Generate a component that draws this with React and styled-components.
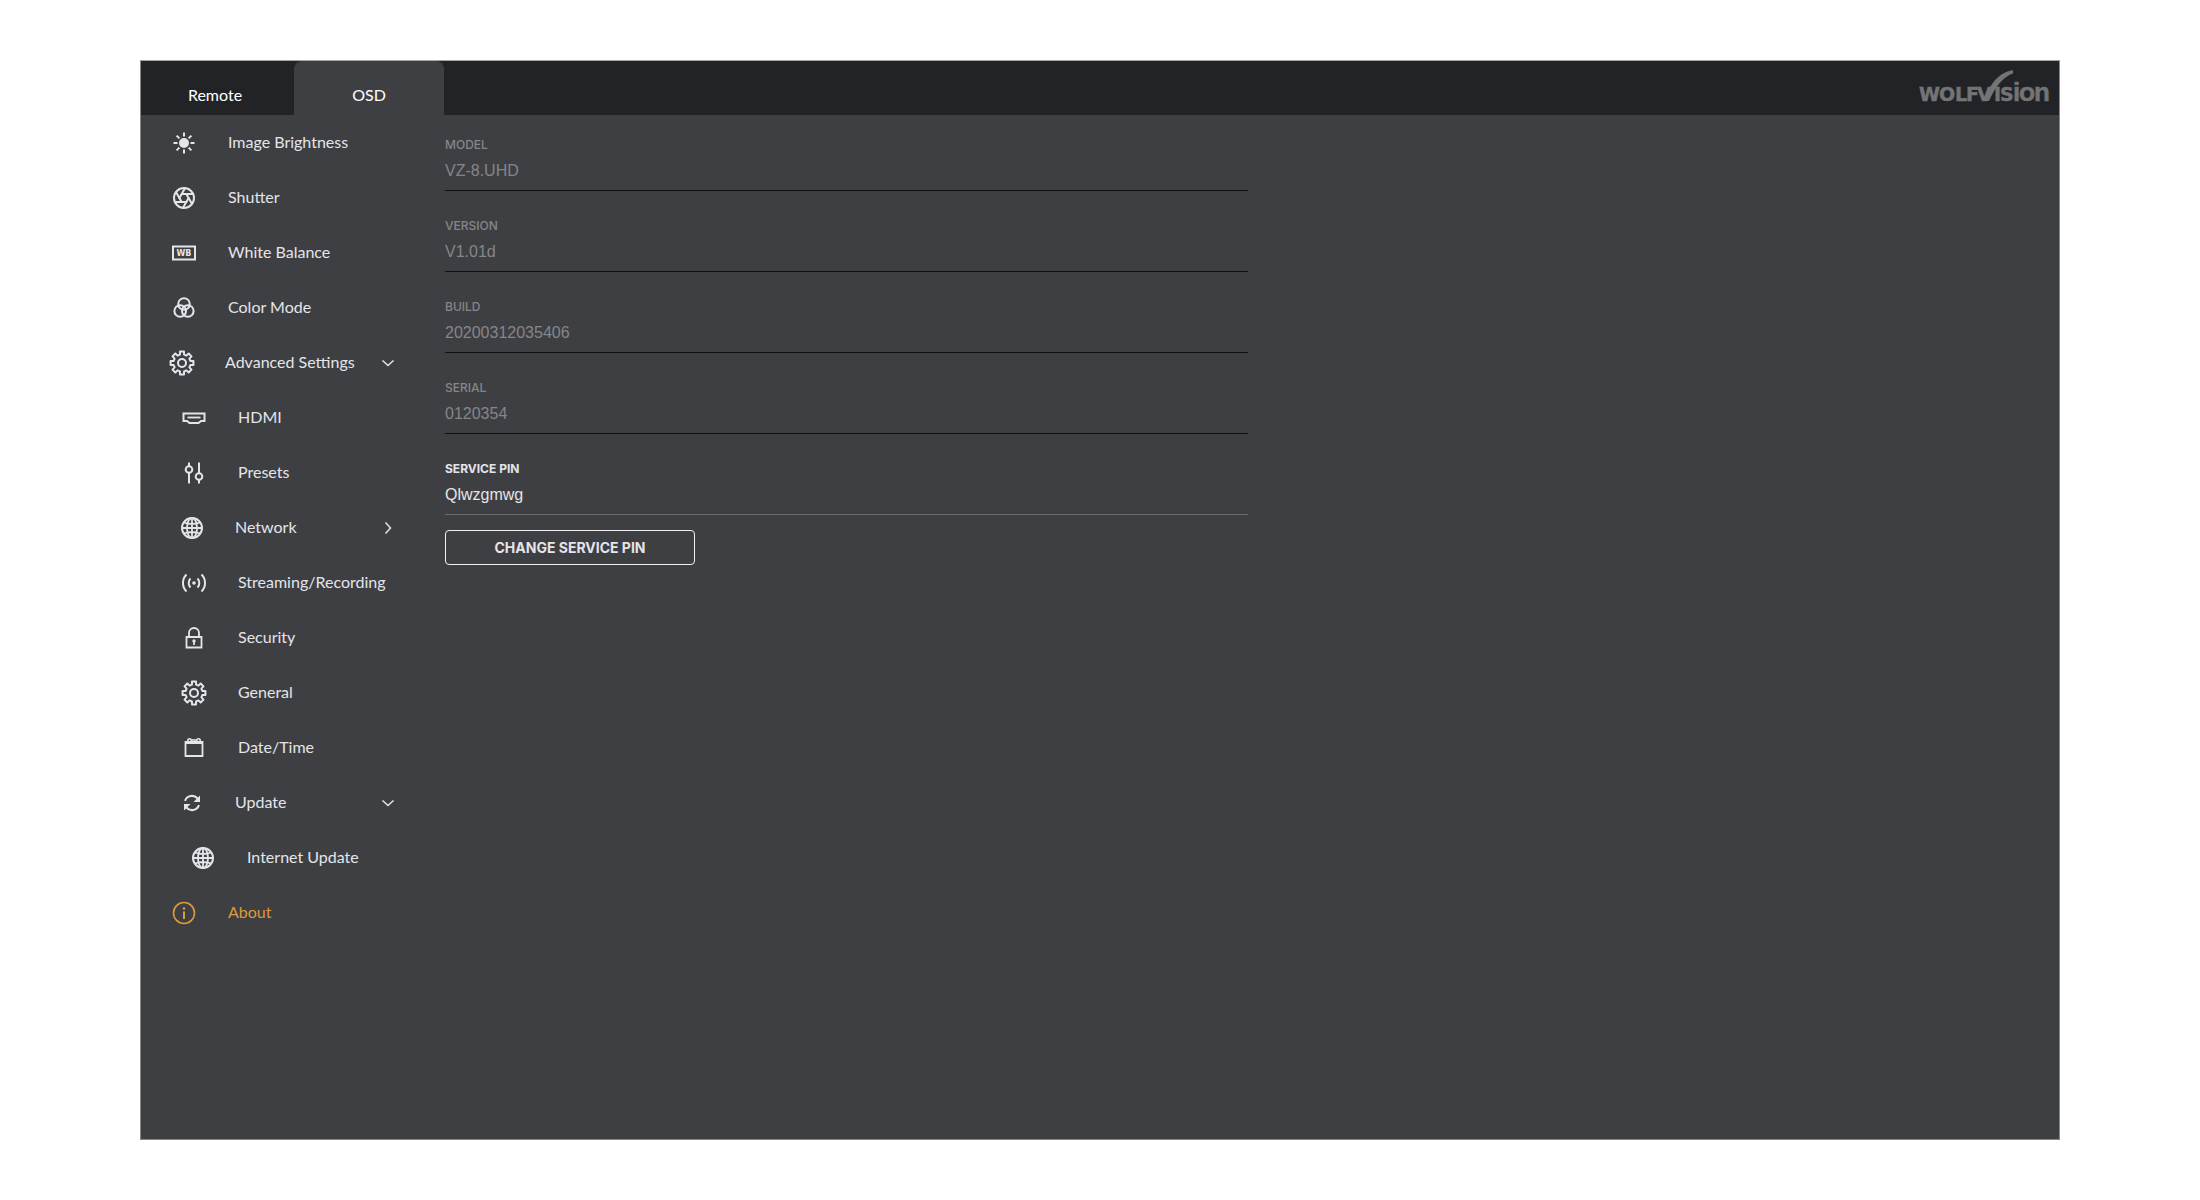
import React, { useState } from "react";
import styled, { createGlobalStyle } from "styled-components";
import { Aperture } from "lucide-react";

const GlobalStyle = createGlobalStyle`
  *, *::before, *::after { box-sizing: border-box; }
  body {
    margin: 0;
    background: #ffffff;
    font-family: "Liberation Sans", Arial, sans-serif;
  }
`;

const Page = styled.div`
  display: flex;
  min-height: 100vh;
  padding: 60px 140px;
`;

const Frame = styled.div`
  flex: 1;
  display: flex;
  flex-direction: column;
  border: 1px solid #85878a;
  border-top-color: #a3a7a7;
  background: #3e3f43;
`;

const Header = styled.header`
  display: flex;
  height: 54px;
  padding-right: 8px;
  background: #222327;
`;

const Tabs = styled.div`
  display: flex;
  flex: 1;
  gap: 5px;
`;

const Tab = styled.button`
  width: ${(p) => (p.$active ? 150 : 148)}px;
  padding: 14px 0 0;
  border: 0;
  border-radius: 8px 8px 0 0;
  background: ${(p) => (p.$active ? "#3e3f43" : "transparent")};
  color: #ffffff;
  font: 400 16px/20px Lato, sans-serif;
  cursor: pointer;
`;

const Logo = styled.svg`
  display: block;
  width: 132px;
  height: 54px;
  fill: #737476;
`;

const Body = styled.div`
  display: flex;
  flex: 1;
`;

const Nav = styled.nav`
  flex: 0 0 304px;
  min-width: 0;
`;

const indents = [31, 41, 50];

const NavLink = styled.a`
  display: flex;
  align-items: center;
  gap: 32px;
  height: 55px;
  padding-left: ${(p) => indents[p.$level]}px;
  color: ${(p) => (p.$active ? "#dd9a3a" : "#e4e5e9")};
  font: 400 16px/20px Lato, sans-serif;
  text-decoration: none;
`;

const NavGroup = styled.button`
  display: flex;
  align-items: center;
  gap: 31px;
  width: 100%;
  height: 55px;
  padding: 0 51px 0 ${(p) => indents[p.$level] - 2}px;
  border: 0;
  background: none;
  color: #e4e5e9;
  font: 400 16px/20px Lato, sans-serif;
  text-align: left;
  cursor: pointer;
`;

const ItemName = styled.span`
  flex: 1;
  min-width: 0;
  padding-bottom: 2px;
  white-space: nowrap;
`;

const Glyph = styled.svg`
  flex: none;
  width: ${(p) => p.$size || 24}px;
  height: ${(p) => p.$size || 24}px;
  overflow: visible;
  fill: none;
  stroke: currentColor;
  stroke-width: 2;
`;

const Content = styled.main`
  flex: 1;
  display: flex;
  flex-direction: column;
  align-items: flex-start;
  gap: 27px;
  padding-top: 22px;
`;

const Field = styled.label`
  display: block;
  width: 50%;
  max-width: 803px;
  color: ${(p) => (p.$editable ? "#e4e5e9" : "#85868a")};
`;

const Caption = styled.span`
  display: block;
  font: ${(p) => (p.$editable ? 700 : 500)} 12px/16px Inter, sans-serif;
  text-transform: uppercase;
`;

const Value = styled.input`
  display: block;
  width: 100%;
  padding: 9px 0 10px;
  border: 0;
  border-bottom: 1px solid ${(p) => (p.$editable ? "#6b6c70" : "#101114")};
  border-radius: 0;
  outline: 0;
  background: transparent;
  color: inherit;
  font: 400 16px/18px "Liberation Sans", Arial, sans-serif;
  height: 38px;
`;

const PinGroup = styled.div`
  display: flex;
  flex-direction: column;
  align-items: flex-start;
  gap: 15px;
  width: 100%;
`;

const PinButton = styled.button`
  width: 250px;
  height: 35px;
  padding: 0;
  border: 1px solid #f0f0f3;
  border-radius: 4px;
  background: transparent;
  color: #e4e5e9;
  font: 700 14px/16px Inter, sans-serif;
  text-transform: uppercase;
  cursor: pointer;
`;

function gearPath() {
  const pt = (r, deg) => {
    const a = (deg * Math.PI) / 180;
    return `${(12 + r * Math.cos(a)).toFixed(2)} ${(12 + r * Math.sin(a)).toFixed(2)}`;
  };
  const parts = [];
  for (let i = 0; i < 8; i += 1) {
    const c = i * 45;
    parts.push(pt(8.6, c - 14), pt(11.6, c - 10), pt(11.6, c + 10), pt(8.6, c + 14));
  }
  return `M${parts.join("L")}Z`;
}

const GEAR = gearPath();

const drawings = {
  sun: (
    <>
      <circle cx="12" cy="12" r="5" fill="currentColor" stroke="none" />
      <path d="M12 1.5v4M12 18.5v4M1.5 12h4M18.5 12h4M4.6 4.6l2.8 2.8M16.6 16.6l2.8 2.8M4.6 19.4l2.8-2.8M16.6 7.4l2.8-2.8" />
    </>
  ),
  wb: (
    <>
      <path d="M1 5.5h22v13H1z" />
      <text x="12" y="15" textAnchor="middle" fontFamily="DejaVu Sans" fontWeight="700" fontSize="8" fill="currentColor" stroke="none">WB</text>
    </>
  ),
  color: (
    <>
      <circle cx="12" cy="8" r="5.8" />
      <circle cx="8.2" cy="15" r="5.8" />
      <circle cx="15.8" cy="15" r="5.8" />
    </>
  ),
  gear: (
    <>
      <path d={GEAR} strokeLinejoin="round" />
      <circle cx="12" cy="12" r="4" />
    </>
  ),
  hdmi: (
    <>
      <path d="M1.5 7.5h21v7.5h-3.5l-2.5 2h-9l-2.5-2H1.5z" />
      <path d="M5.5 11.5h13" strokeWidth="1.8" />
    </>
  ),
  presets: (
    <>
      <path d="M7 1.5v3.5M7 12v10.5M17 1.5v10.500M17 19v3.5" />
      <circle cx="7" cy="8.500" r="3.300" />
      <circle cx="17" cy="15.500" r="3.300" />
    </>
  ),
  globe: (
    <>
      <circle cx="12" cy="12" r="10" />
      <ellipse cx="12" cy="12" rx="5" ry="10" strokeWidth="1.800" />
      <path d="M12 2v20M2 12h20M4 6.500q8 3 16 0M4 17.500q8-3 16 0" strokeWidth="1.800" />
    </>
  ),
  stream: (
    <>
      <circle cx="12" cy="12" r="1.800" fill="currentColor" stroke="none" />
      <path d="M8.500 7.500a6.500 6.500 0 0 0 0 9M15.500 7.500a6.500 6.500 0 0 1 0 9M4.500 3.500a12 12 0 0 0 0 17M19.500 3.500a12 12 0 0 1 0 17" />
    </>
  ),
  lock: (
    <>
      <path d="M4.500 11h15v10.500h-15zM7 11V7a5 5 0 0 1 10 0v4" strokeWidth="1.800" />
      <circle cx="12" cy="15" r="1.700" fill="currentColor" stroke="none" />
      <path d="M12 15v4" strokeWidth="1.800" />
    </>
  ),
  calendar: (
    <>
      <path d="M3.500 6h17v14h-17z" strokeWidth="1.800" />
      <path d="M3 7h18" strokeWidth="2" />
      <circle cx="7.500" cy="4.500" r="1.700" strokeWidth="1.600" />
      <circle cx="16.500" cy="4.500" r="1.700" strokeWidth="1.600" />
      <path d="M9.500 4h5" strokeWidth="1.600" />
    </>
  ),
  refresh: (
    <>
      <path d="M5 9.800A7.400 7.400 0 0 1 17.600 7.500M19 14.200A7.400 7.400 0 0 1 6.400 16.500" />
      <path d="M20 4.500v6.500h-6.500zM4 19.500V13h6.500z" fill="currentColor" stroke="none" />
    </>
  ),
  info: (
    <>
      <circle cx="12" cy="12" r="10.500" strokeWidth="1.600" />
      <circle cx="12" cy="7.500" r="1.300" fill="currentColor" stroke="none" />
      <path d="M12 10.500v7.500" />
    </>
  ),
};

function Icon({ name }) {
  if (name === "shutter") return <Aperture size={24} strokeWidth={2} aria-hidden="true" />;
  return (
    <Glyph viewBox="0 0 24 24" aria-hidden="true">
      {drawings[name]}
    </Glyph>
  );
}

function Chevron({ open }) {
  return (
    <Glyph viewBox="0 0 12 12" $size={12} aria-hidden="true">
      <path d={open ? "M.5 3.500 6 8.500l5.500-5" : "M3.500.5 8.500 6l-5 5.500"} strokeWidth="1.500" />
    </Glyph>
  );
}

const items = [
  { icon: "sun", label: "Image Brightness", level: 0 },
  { icon: "shutter", label: "Shutter", level: 0 },
  { icon: "wb", label: "White Balance", level: 0 },
  { icon: "color", label: "Color Mode", level: 0 },
  { icon: "gear", label: "Advanced Settings", level: 0, group: true, open: true },
  { icon: "hdmi", label: "HDMI", level: 1 },
  { icon: "presets", label: "Presets", level: 1 },
  { icon: "globe", label: "Network", level: 1, group: true, open: false },
  { icon: "stream", label: "Streaming/Recording", level: 1 },
  { icon: "lock", label: "Security", level: 1 },
  { icon: "gear", label: "General", level: 1 },
  { icon: "calendar", label: "Date/Time", level: 1 },
  { icon: "refresh", label: "Update", level: 1, group: true, open: true },
  { icon: "globe", label: "Internet Update", level: 2 },
  { icon: "info", label: "About", level: 0, active: true },
];

const details = [
  { id: "model", label: "Model", value: "VZ-8.UHD" },
  { id: "version", label: "Version", value: "V1.01d" },
  { id: "build", label: "Build", value: "20200312035406" },
  { id: "serial", label: "Serial", value: "0120354" },
];

export default function App() {
  const [pin, setPin] = useState("Qlwzgmwg");
  return (
    <>
      <GlobalStyle />
      <Page>
        <Frame>
          <Header>
            <Tabs>
              <Tab type="button">Remote</Tab>
              <Tab type="button" $active>OSD</Tab>
            </Tabs>
            <Logo viewBox="0 0 132 54" role="img" aria-label="WolfVision">
              <g
                fontFamily="DejaVu Sans, sans-serif"
                fontWeight="700"
                fontSize="19"
                stroke="#737476"
                strokeWidth="0.5"
              >
                <text x="0 20 36 47 58 75 81" y="40">WOLFVIS</text>
                <text x="94" y="40" fontFamily="Liberation Sans, sans-serif" fontSize="26">i</text>
                <text x="100" y="40">O</text>
                <text x="115" y="40" fontFamily="Liberation Sans, sans-serif" fontSize="26">n</text>
              </g>
              <path d="M65 40C70 25 78 12 94 9v3.500C84 16 76 26 70 40z" />
            </Logo>
          </Header>
          <Body>
            <Nav>
              {items.map((item) =>
                item.group ? (
                  <NavGroup key={item.label} type="button" $level={item.level} aria-expanded={item.open}>
                    <Icon name={item.icon} />
                    <ItemName>{item.label}</ItemName>
                    <Chevron open={item.open} />
                  </NavGroup>
                ) : (
                  <NavLink key={item.label} href="#" $level={item.level} $active={item.active}>
                    <Icon name={item.icon} />
                    <ItemName>{item.label}</ItemName>
                  </NavLink>
                )
              )}
            </Nav>
            <Content>
              {details.map((d) => (
                <Field key={d.id} htmlFor={d.id}>
                  <Caption>{d.label}</Caption>
                  <Value id={d.id} value={d.value} readOnly />
                </Field>
              ))}
              <PinGroup>
                <Field htmlFor="pin" $editable>
                  <Caption $editable>Service PIN</Caption>
                  <Value id="pin" $editable value={pin} onChange={(e) => setPin(e.target.value)} />
                </Field>
                <PinButton type="button">Change Service PIN</PinButton>
              </PinGroup>
            </Content>
          </Body>
        </Frame>
      </Page>
    </>
  );
}
